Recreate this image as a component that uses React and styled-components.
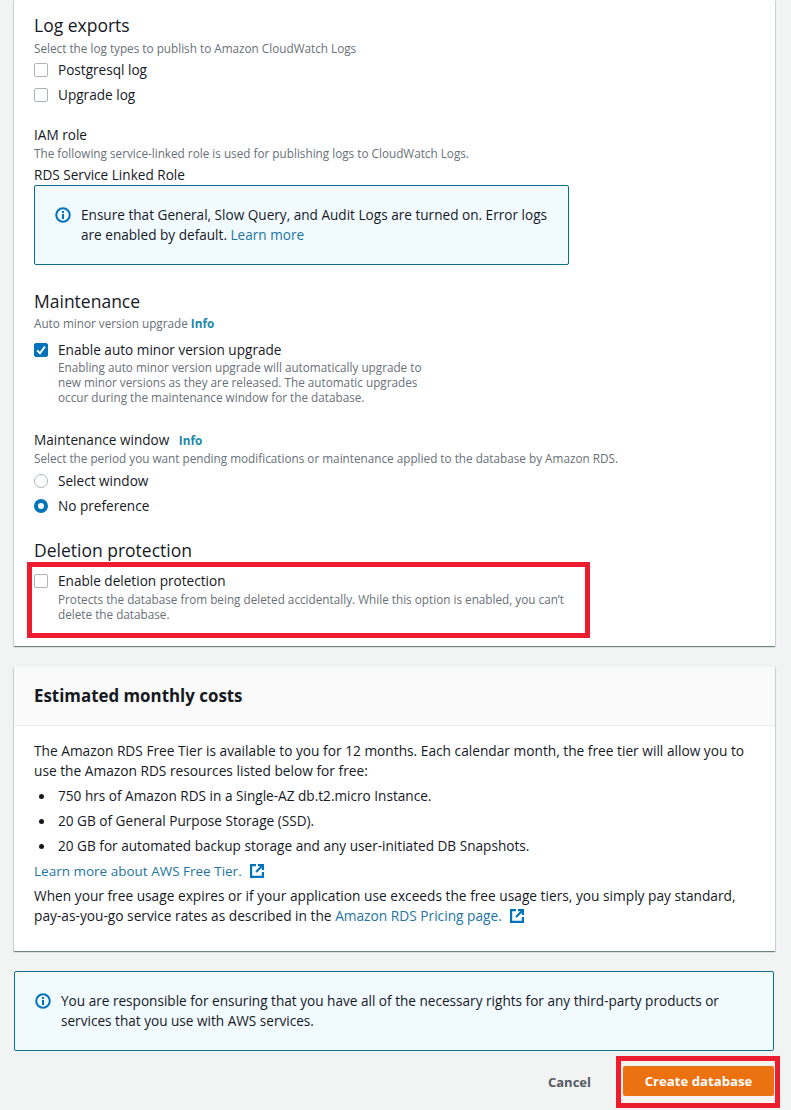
import React from "react";
import styled, { createGlobalStyle } from "styled-components";

const GlobalStyle = createGlobalStyle`
  html, body {
    margin: 0;
    padding: 0;
    background: #f2f3f3;
  }
  body {
    font-family: "Open Sans", "Liberation Sans", sans-serif;
    color: #16191f;
    font-size: 13.6px;
  }
`;

const Page = styled.div`
  width: 791px;
  height: 1110px;
  overflow: hidden;
  padding: 0 16px 0 14px;
  box-sizing: border-box;
`;

const Card = styled.section`
  background: #fff;
  width: 761px;
  box-shadow: 0 1px 1px 0 rgba(0, 28, 36, 0.4), 1px 1px 1px 0 rgba(0, 28, 36, 0.1),
    -1px 1px 1px 0 rgba(0, 28, 36, 0.1);
`;

const MainCard = styled(Card)`
  height: 646px;
  padding: 14px 20px 0;
  box-sizing: border-box;
`;

const SectionTitle = styled.h2`
  margin: ${(p) => p.$mt || 0}px 0 0;
  font-size: 17.5px;
  line-height: 22px;
  font-weight: 400;
`;

const Hint = styled.div`
  font-size: 11.74px;
  line-height: 16px;
  color: #687078;
  margin-top: ${(p) => p.$mt || 0}px;
  a {
    color: #1b87a8;
    font-weight: 700;
  }
`;

const OptionRow = styled.label`
  display: flex;
  align-items: flex-start;
  gap: 10px;
  margin-top: ${(p) => p.$mt || 0}px;
  line-height: 20px;
`;

const Box = styled.span`
  box-sizing: border-box;
  width: 14px;
  height: 14px;
  margin-top: 3px;
  flex: none;
  display: flex;
  border-radius: 2px;
  border: 1px solid ${(p) => (p.$on ? "#0073bb" : "#aab7b8")};
  background: ${(p) => (p.$on ? "#0073bb" : "#fff")};
`;

const Radio = styled.span`
  box-sizing: border-box;
  width: 14px;
  height: 14px;
  margin-top: 3px;
  flex: none;
  border-radius: 50%;
  border: ${(p) => (p.$on ? "4.5px solid #0073bb" : "1px solid #aab7b8")};
  background: #fff;
`;

const OptionHint = styled.div`
  font-size: 11.74px;
  line-height: 15px;
  color: #687078;
  max-width: ${(p) => p.$w || 520}px;
`;

const Label = styled.div`
  margin-top: ${(p) => p.$mt || 0}px;
  line-height: 18px;
  a {
    margin-left: 6px;
    color: #1b87a8;
    font-size: 11.74px;
    font-weight: 700;
  }
`;

const Alert = styled.div`
  box-sizing: border-box;
  width: ${(p) => p.$w}px;
  height: 80px;
  margin-top: ${(p) => p.$mt || 0}px;
  background: #f1faff;
  border: 1px solid #0d6e8c;
  border-radius: 2px;
  display: flex;
  gap: 10px;
  padding: 19px 20px;
  line-height: 20px;
  a {
    color: #23759f;
    text-decoration: none;
  }
`;

const AlertIcon = styled.svg`
  width: 16px;
  height: 16px;
  flex: none;
  margin-top: 2px;
`;

const Highlight = styled.div`
  box-sizing: border-box;
  border: 5px solid #ed1c2e;
  width: 563px;
  height: 76px;
  margin: 1px 0 0 -7px;
  padding: 4px 0 0 2px;
`;

const DeletionHint = styled(OptionHint)`
  margin-top: 1px;
`;

const CostCard = styled(Card)`
  margin-top: 21px;
  height: 284px;
`;

const CostHeader = styled.header`
  height: 59px;
  box-sizing: border-box;
  background: #fafafa;
  border-bottom: 1px solid #eaeded;
  padding: 18px 20px 0;
  font-size: 16.9px;
  line-height: 22px;
  font-weight: 700;
`;

const CostBody = styled.div`
  padding: 15px 20px 0;
  line-height: 20px;
  font-size: 13.73px;
  a {
    color: #23759f;
    text-decoration: none;
  }
`;

const Bullets = styled.ul`
  margin: 5px 0 0;
  padding: 0 0 0 5px;
  list-style: none;
  font-size: 13.62px;
  li {
    display: flex;
    align-items: center;
    gap: 14px;
    margin-bottom: 5px;
  }
  li::before {
    content: "";
    flex: none;
    width: 5px;
    height: 5px;
    border-radius: 50%;
    background: #16191f;
  }
`;

const FreeTierLink = styled.a`
  font-size: 13.5px;
`;

const Nowrap = styled.span`
  white-space: nowrap;
`;

const UsageNote = styled.div`
  margin-top: 5px;
`;

const ExternalIcon = styled.svg`
  width: 14px;
  height: 14px;
  margin-left: 8px;
  vertical-align: -2px;
`;

const BottomAlert = styled.div`
  margin-top: 20px;
`;

const Footer = styled.div`
  display: flex;
  justify-content: flex-end;
  align-items: center;
  margin-top: 5px;
  margin-right: -5px;
  gap: 25px;
`;

const CancelLink = styled.span`
  font-weight: 700;
  font-size: 13px;
  color: #545b64;
`;

const ButtonFrame = styled.div`
  box-sizing: border-box;
  width: 164px;
  height: 52px;
  border: 5px solid #ed1c2e;
  background: #f7f3f1;
  padding: 5px 0 0 2px;
`;

const PrimaryButton = styled.button`
  width: 151px;
  height: 30px;
  border: 0;
  border-radius: 2px;
  background: #ec7211;
  color: #fff;
  font-family: inherit;
  font-size: 13.2px;
  font-weight: 700;
  padding: 0;
`;

const InfoIcon = () => (
  <AlertIcon viewBox="0 0 16 16" fill="none">
    <circle cx="8" cy="8" r="6.75" stroke="#0073bb" strokeWidth="2" />
    <rect x="7" y="7" width="2" height="5" fill="#0073bb" />
    <rect x="7" y="4" width="2" height="2" fill="#0073bb" />
  </AlertIcon>
);

const External = () => (
  <ExternalIcon viewBox="0 0 14 14" fill="none" stroke="#0073bb" strokeWidth="2.2">
    <path d="M6 1.1H1.1v11.8h11.8V8" />
    <path d="M8 1.1h4.9V6" />
    <path d="M12.5 1.5 6 8" />
  </ExternalIcon>
);

const Check = () => (
  <svg viewBox="0 0 14 14" width="12" height="12" fill="none">
    <path d="M2.5 7.5 5.8 10.8 11.5 3" stroke="#fff" strokeWidth="2.2" />
  </svg>
);

export default function App() {
  return (
    <Page>
      <GlobalStyle />
      <MainCard>
        <SectionTitle>Log exports</SectionTitle>
        <Hint $mt={4}>Select the log types to publish to Amazon CloudWatch Logs</Hint>
        <OptionRow $mt={4}>
          <Box />
          Postgresql log
        </OptionRow>
        <OptionRow $mt={5}>
          <Box />
          Upgrade log
        </OptionRow>

        <Label $mt={21}>IAM role</Label>
        <Hint $mt={1}>The following service-linked role is used for publishing logs to CloudWatch Logs.</Hint>
        <Label $mt={5}>RDS Service Linked Role</Label>
        <Alert $w={535} $mt={1}>
          <InfoIcon />
          <div>
            Ensure that General, Slow Query, and Audit Logs are turned on. Error logs are enabled by
            default. <a>Learn more</a>
          </div>
        </Alert>

        <SectionTitle $mt={25}>Maintenance</SectionTitle>
        <Hint $mt={3}>
          Auto minor version upgrade <a>Info</a>
        </Hint>
        <OptionRow $mt={9}>
          <Box $on>
            <Check />
          </Box>
          <div>
            Enable auto minor version upgrade
            <OptionHint $w={375}>
              Enabling auto minor version upgrade will automatically upgrade to new minor versions
              as they are released. The automatic upgrades occur during the maintenance window for
              the database.
            </OptionHint>
          </div>
        </OptionRow>

        <Label $mt={26}>
          Maintenance window <a>Info</a>
        </Label>
        <Hint $mt={1}>
          Select the period you want pending modifications or maintenance applied to the database by
          Amazon RDS.
        </Hint>
        <OptionRow $mt={5}>
          <Radio />
          Select window
        </OptionRow>
        <OptionRow $mt={5}>
          <Radio $on />
          No preference
        </OptionRow>

        <SectionTitle $mt={23}>Deletion protection</SectionTitle>
        <Highlight>
          <OptionRow>
            <Box />
            <div>
              Enable deletion protection
              <DeletionHint>
                Protects the database from being deleted accidentally. While this option is enabled,
                you can’t delete the database.
              </DeletionHint>
            </div>
          </OptionRow>
        </Highlight>
      </MainCard>

      <CostCard>
        <CostHeader>Estimated monthly costs</CostHeader>
        <CostBody>
          The Amazon RDS Free Tier is available to you for 12 months. Each calendar month, the free
          tier will allow you to use the Amazon RDS resources listed below for free:
          <Bullets>
            <li>750 hrs of Amazon RDS in a Single-AZ db.t2.micro Instance.</li>
            <li>20 GB of General Purpose Storage (SSD).</li>
            <li>20 GB for automated backup storage and any user-initiated DB Snapshots.</li>
          </Bullets>
          <FreeTierLink>
            Learn more about AWS Free Tier.
            <External />
          </FreeTierLink>
          <UsageNote>
            When your free usage expires or if your application use exceeds the free usage tiers, you
            simply pay standard, <Nowrap>pay-as-you-go</Nowrap> service rates as described in the{" "}
            <a>
              Amazon RDS Pricing page.
              <External />
            </a>
          </UsageNote>
        </CostBody>
      </CostCard>

      <BottomAlert>
        <Alert $w={760}>
          <InfoIcon />
          <div>
            You are responsible for ensuring that you have all of the necessary rights for any
            third-party products or services that you use with AWS services.
          </div>
        </Alert>
      </BottomAlert>

      <Footer>
        <CancelLink>Cancel</CancelLink>
        <ButtonFrame>
          <PrimaryButton>Create database</PrimaryButton>
        </ButtonFrame>
      </Footer>
    </Page>
  );
}
